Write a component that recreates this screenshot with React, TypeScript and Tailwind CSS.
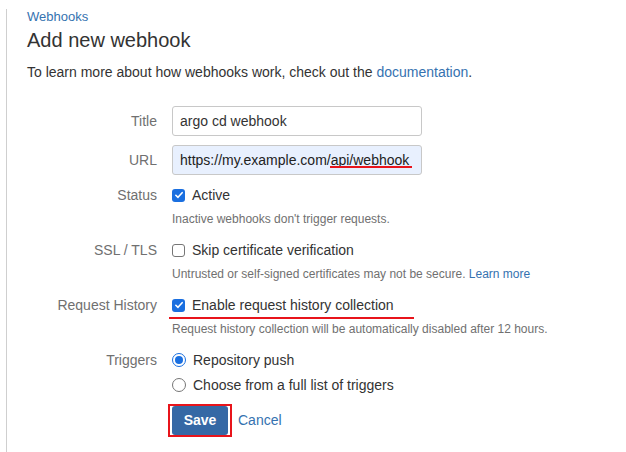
import React from 'react';

const font = { fontFamily: '"Liberation Sans", Arial, Helvetica, sans-serif' };

function Checkbox({ checked }: { checked?: boolean }) {
  if (checked) {
    return (
      <span className="flex h-[13px] w-[13px] shrink-0 items-center justify-center rounded-[3px] bg-[#1a6fe0]">
        <svg viewBox="0 0 12 12" className="h-[10px] w-[10px]" fill="none">
          <path d="M2.2 6.3 4.8 8.8 9.8 3.2" stroke="white" strokeWidth="1.9" strokeLinecap="round" strokeLinejoin="round" />
        </svg>
      </span>
    );
  }
  return <span className="h-[13px] w-[13px] shrink-0 rounded-[3px] border border-[#767676] bg-white" />;
}

function Radio({ checked }: { checked?: boolean }) {
  if (checked) {
    return (
      <span className="flex h-[14px] w-[14px] shrink-0 items-center justify-center rounded-full border-[1.5px] border-[#1a6fe0] bg-white">
        <span className="h-[8px] w-[8px] rounded-full bg-[#1a6fe0]" />
      </span>
    );
  }
  return <span className="h-[14px] w-[14px] shrink-0 rounded-full border border-[#767676] bg-white" />;
}

function Label({ children }: { children: React.ReactNode }) {
  return <div className="w-[145px] shrink-0 pr-[15px] text-right text-[14px] text-[#707070]">{children}</div>;
}

export default function App() {
  return (
    <div className="h-[452px] w-[626px] overflow-hidden bg-white pl-[6px]" style={font}>
      <div className="h-full border-l border-[#cfcfcf] pl-[20px]">
        <a className="mt-[9px] block text-[13px] leading-[16px] text-[#3572b0]">Webhooks</a>
        <h1 className="mt-[3px] text-[20px] leading-[24px] text-[#333]">Add new webhook</h1>
        <p className="mt-[10px] text-[14px] leading-[20px] text-[#333]">
          To learn more about how webhooks work, check out the{' '}
          <a className="text-[#3572b0]">documentation</a>.
        </p>

        <div className="mt-[24px] flex h-[30px] items-center">
          <Label>Title</Label>
          <div className="flex h-[30px] w-[250px] items-center rounded-[3px] border border-[#c8c8c8] bg-white px-[7px] text-[14px] text-[#333]">
            argo cd webhook
          </div>
        </div>

        <div className="mt-[9px] flex h-[30px] items-center">
          <Label>URL</Label>
          <div className="flex h-[30px] w-[250px] items-center overflow-hidden whitespace-nowrap rounded-[3px] border border-[#c8c8c8] bg-[#e8f0fe] px-[7px] text-[14px] text-[#222]">
            https://my.example.com/
            <span className="relative">
              api/webhook
              <span className="absolute -left-[1px] -right-[3px] top-[16px] h-[2px] bg-[#e8141b]" />
            </span>
          </div>
        </div>

        <div className="mt-[10px] flex h-[20px] items-center">
          <Label>Status</Label>
          <div className="flex items-center gap-[7px] text-[14px] text-[#333]">
            <Checkbox checked />
            Active
          </div>
        </div>
        <div className="mt-[6px] pl-[145px] text-[12px] leading-[16px] text-[#707070]">
          Inactive webhooks don't trigger requests.
        </div>

        <div className="mt-[13px] flex h-[20px] items-center">
          <Label>SSL / TLS</Label>
          <div className="flex items-center gap-[7px] text-[14px] text-[#333]">
            <Checkbox />
            Skip certificate verification
          </div>
        </div>
        <div className="mt-[6px] pl-[145px] text-[12px] leading-[16px] text-[#707070]">
          Untrusted or self-signed certificates may not be secure.{' '}
          <a className="text-[#3572b0]">Learn more</a>
        </div>

        <div className="mt-[13px] flex h-[20px] items-center">
          <Label>Request History</Label>
          <div className="relative flex items-center gap-[7px] text-[14px] text-[#333]">
            <Checkbox checked />
            Enable request history collection
            <span className="absolute left-[-3px] top-[22px] h-[2px] w-[245px] bg-[#e8141b]" />
          </div>
        </div>
        <div className="mt-[6px] pl-[145px] text-[12px] leading-[16px] text-[#707070]">
          Request history collection will be automatically disabled after 12 hours.
        </div>

        <div className="mt-[13px] flex h-[20px] items-center">
          <Label>Triggers</Label>
          <div className="flex items-center gap-[7px] text-[14px] text-[#333]">
            <Radio checked />
            Repository push
          </div>
        </div>
        <div className="mt-[5px] flex h-[20px] items-center pl-[145px]">
          <div className="flex items-center gap-[7px] text-[14px] text-[#333]">
            <Radio />
            Choose from a full list of triggers
          </div>
        </div>

        <div className="mt-[9px] flex items-center pl-[141px]">
          <div className="border-2 border-[#e8141b] px-[2px]">
            <button className="h-[29px] w-[56px] rounded-[3px] bg-[#3568a5] text-[14px] font-bold text-white">
              Save
            </button>
          </div>
          <a className="ml-[6px] text-[14px] text-[#3572b0]">Cancel</a>
        </div>
      </div>
    </div>
  );
}
